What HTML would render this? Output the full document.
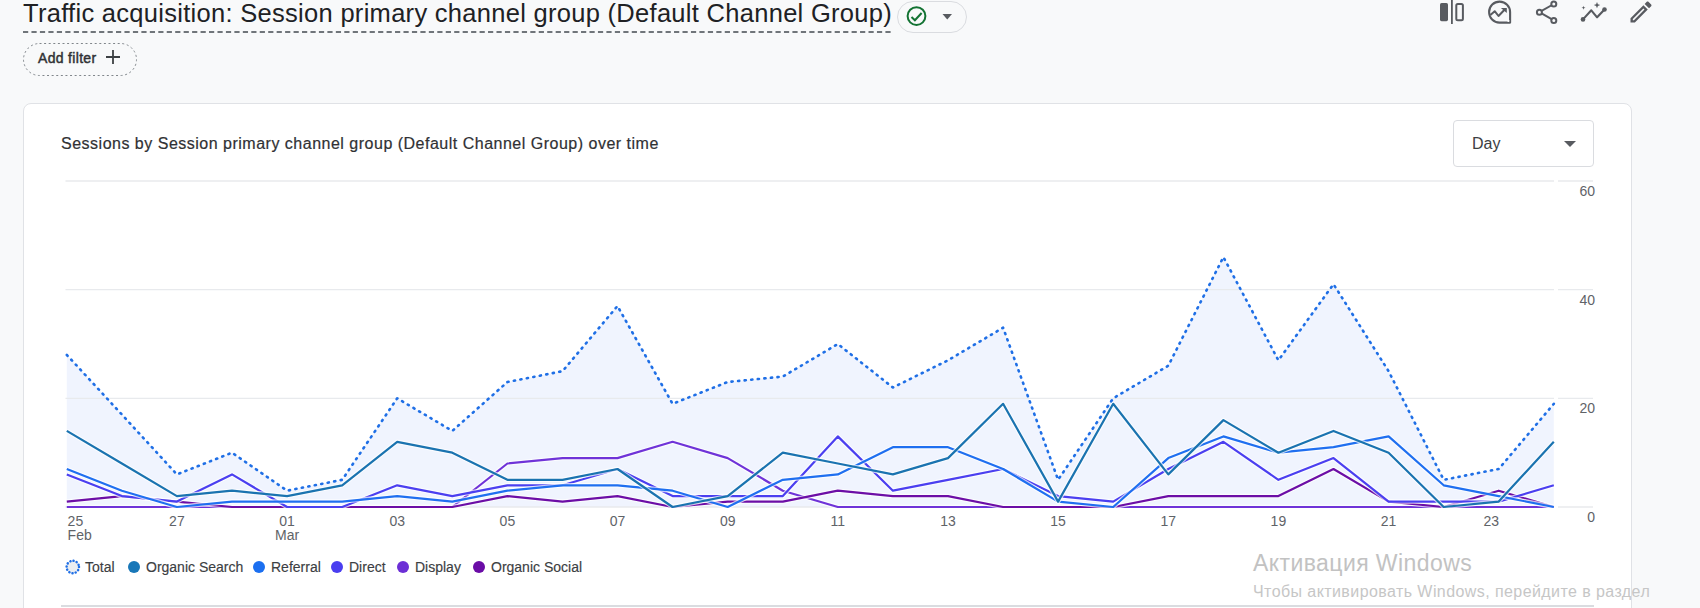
<!DOCTYPE html>
<html><head><meta charset="utf-8">
<style>
html,body{margin:0;padding:0;}
body{width:1700px;height:608px;overflow:hidden;background:#f8f9fa;position:relative;font-family:"Liberation Sans",sans-serif;}
.abs{position:absolute;}
.title{left:23px;top:-4px;font-size:25.5px;letter-spacing:0.29px;color:#202124;white-space:nowrap;line-height:34px;}
.uline{left:23px;top:31px;width:868px;height:2px;background-image:linear-gradient(to right,#80868b 0 5px,transparent 5px 8.5px);background-size:8.5px 2px;}
.pill{left:897px;top:0.5px;width:70px;height:32px;border:1px solid #dadce0;border-radius:16px;box-sizing:border-box;}
.chip{left:23px;top:43px;width:113px;height:32px;border:1px dashed #9aa0a6;border-radius:16px;box-sizing:border-box;}
.chiptext{left:38px;top:49px;font-size:14px;letter-spacing:0.32px;color:#303134;-webkit-text-stroke:0.45px #303134;line-height:18px;}
.card{left:23px;top:103px;width:1609px;height:600px;background:#fff;border:1px solid #e0e2e6;border-radius:8px;box-sizing:border-box;}
.ctitle{left:61px;top:134px;font-size:16px;letter-spacing:0.5px;color:#303134;-webkit-text-stroke:0.2px #303134;line-height:20px;white-space:nowrap;}
.daybox{left:1453px;top:120px;width:141px;height:47px;border:1px solid #dadce0;border-radius:4px;box-sizing:border-box;}
.daytext{left:1472px;top:134px;font-size:16px;color:#3c4043;line-height:20px;}
.chart{position:absolute;left:0;top:0;}
.legend{top:559px;font-size:14px;color:#3c4043;-webkit-text-stroke:0.15px #3c4043;line-height:16px;white-space:nowrap;}
.dot{width:12px;height:12px;border-radius:6px;top:561px;}
.botline{left:61px;top:605px;width:1533px;height:2px;background:#dadce0;}
.wm1{left:1253px;top:549px;font-size:23px;letter-spacing:0.42px;color:#c2c2c2;line-height:28px;white-space:nowrap;}
.wm2{left:1253px;top:581.5px;font-size:16px;letter-spacing:0.42px;color:#c6c6c6;line-height:20px;white-space:nowrap;}
</style></head><body>
<div class="abs title">Traffic acquisition: Session primary channel group (Default Channel Group)</div>
<svg class="abs" style="left:0;top:0" width="900" height="40"><line x1="23" y1="32" x2="891" y2="32" stroke="#70757a" stroke-width="2" stroke-dasharray="5.2 3.255"/></svg>
<div class="abs pill"></div>
<svg class="abs" style="left:905px;top:5px" width="24" height="24" viewBox="0 0 24 24"><circle cx="11.5" cy="11.1" r="8.9" fill="none" stroke="#137333" stroke-width="2"/><path d="M6.5 12.1 L9.9 15.3 L16.6 8" fill="none" stroke="#137333" stroke-width="2"/></svg>
<svg class="abs" style="left:940px;top:12px" width="16" height="10" viewBox="0 0 16 10"><path d="M2.5 2 L12 2 L7.25 7.4 Z" fill="#585b60"/></svg>

<svg class="abs" style="left:1436px;top:0px" width="32" height="28" viewBox="0 0 32 28">
<rect x="4" y="2.9" width="8" height="18.3" rx="1.6" fill="#585b60"/>
<rect x="15" y="0" width="1.8" height="24" fill="#585b60"/>
<rect x="20.3" y="3.9" width="6.6" height="16.3" rx="1.5" fill="none" stroke="#585b60" stroke-width="2"/>
</svg>
<svg class="abs" style="left:1484px;top:0px" width="32" height="28" viewBox="0 0 32 28">
<path d="M15.5 22.6 A10.5 10.5 0 1 1 26.1 12.2 L26.1 22.6 Z" fill="none" stroke="#585b60" stroke-width="2.1" stroke-linejoin="round"/>
<circle cx="24.4" cy="20.9" r="1.1" fill="#fff"/>
<path d="M6.4 14.9 L10.7 11.2 L14.5 16 L20.5 9.8" fill="none" stroke="#585b60" stroke-width="2" stroke-linejoin="round"/>
<path d="M16.9 7.9 L22.8 7.9 L22.8 13 Z" fill="#585b60"/>
</svg>
<svg class="abs" style="left:1530px;top:0px" width="32" height="28" viewBox="0 0 32 28">
<line x1="9.4" y1="12.2" x2="23.8" y2="4" stroke="#585b60" stroke-width="2"/>
<line x1="9.4" y1="12.2" x2="23.8" y2="20.4" stroke="#585b60" stroke-width="2"/>
<circle cx="9.4" cy="12.2" r="2.5" fill="#f8f9fa" stroke="#585b60" stroke-width="2"/>
<circle cx="23.8" cy="4" r="2.5" fill="#f8f9fa" stroke="#585b60" stroke-width="2"/>
<circle cx="23.8" cy="20.4" r="2.5" fill="#f8f9fa" stroke="#585b60" stroke-width="2"/>
</svg>
<svg class="abs" style="left:1576px;top:0px" width="34" height="28" viewBox="0 0 34 28">
<path d="M7 19.4 L15.3 10.3 L21.1 17.3 L28.5 9.5" fill="none" stroke="#585b60" stroke-width="2.1" stroke-linejoin="round"/>
<circle cx="7" cy="19.4" r="2.3" fill="#585b60"/><circle cx="28.5" cy="9.5" r="2.3" fill="#585b60"/>
<path d="M7.5 5.8 L8 7.3 L9.5 7.8 L8 8.3 L7.5 9.8 L7 8.3 L5.5 7.8 L7 7.3 Z" fill="#585b60"/>
<path d="M21 2 L21.9 4.2 L24.2 5.1 L21.9 6 L21 8.2 L20.1 6 L17.8 5.1 L20.1 4.2 Z" fill="#585b60"/>
</svg>
<svg class="abs" style="left:1627px;top:-1.8px" width="28" height="28" viewBox="0 0 24 24"><path fill="#585b60" d="M3 17.25V21h3.75L17.81 9.94l-3.75-3.75L3 17.25zM5.92 19H5v-.92l9.06-9.06.92.92L5.92 19zM20.71 5.63l-2.34-2.34c-.2-.2-.45-.29-.71-.29s-.51.1-.7.29l-1.83 1.83 3.75 3.75 1.83-1.83c.39-.39.39-1.02 0-1.41z"/></svg>

<svg class="abs" style="left:22.5px;top:42.5px" width="115" height="34" viewBox="0 0 115 34"><rect x="0.5" y="0.5" width="113" height="32" rx="16" fill="none" stroke="#80868b" stroke-width="1" stroke-dasharray="2 2.6"/></svg>
<div class="abs chiptext">Add filter</div>
<svg class="abs" style="left:105px;top:49px" width="16" height="16" viewBox="0 0 16 16"><path d="M8 1 L8 15 M1 8 L15 8" stroke="#3c4043" stroke-width="1.8"/></svg>

<div class="abs card"></div>
<div class="abs ctitle">Sessions by Session primary channel group (Default Channel Group) over time</div>
<div class="abs daybox"></div>
<div class="abs daytext">Day</div>
<svg class="abs" style="left:1562px;top:139px" width="16" height="10" viewBox="0 0 16 10"><path d="M2 2 L14 2 L8 8 Z" fill="#585b60"/></svg>

<svg class="chart" width="1700" height="608" viewBox="0 0 1700 608">
<path d="M66.8,507.0 L66.8,354.9 L121.9,414.6 L176.9,474.4 L232.0,452.7 L287.1,490.7 L342.2,479.8 L397.2,398.3 L452.3,430.9 L507.4,382.0 L562.5,371.2 L617.5,306.0 L672.6,403.8 L727.7,382.0 L782.8,376.6 L837.8,344.0 L892.9,387.5 L948.0,360.3 L1003.1,327.7 L1058.1,479.8 L1113.2,398.3 L1168.3,365.7 L1223.4,257.1 L1278.4,360.3 L1333.5,284.2 L1388.6,371.2 L1443.7,479.8 L1498.7,469.0 L1553.8,403.8 L1553.8,507.0 Z" fill="#f0f4fe" />
<line x1="65.5" y1="507.0" x2="1554" y2="507.0" stroke="#e8eaed" stroke-width="1.3"/><line x1="1558" y1="507.0" x2="1593" y2="507.0" stroke="#e8eaed" stroke-width="1.3"/><line x1="65.5" y1="398.3" x2="1554" y2="398.3" stroke="#e8eaed" stroke-width="1.3"/><line x1="1558" y1="398.3" x2="1593" y2="398.3" stroke="#e8eaed" stroke-width="1.3"/><line x1="65.5" y1="289.7" x2="1554" y2="289.7" stroke="#e8eaed" stroke-width="1.3"/><line x1="1558" y1="289.7" x2="1593" y2="289.7" stroke="#e8eaed" stroke-width="1.3"/><line x1="65.5" y1="181.0" x2="1554" y2="181.0" stroke="#e8eaed" stroke-width="1.3"/><line x1="1558" y1="181.0" x2="1593" y2="181.0" stroke="#e8eaed" stroke-width="1.3"/>
<g font-family="Liberation Sans, sans-serif" font-size="14" fill="#5f6368"><text x="1595" y="522.0" text-anchor="end">0</text><text x="1595" y="413.3" text-anchor="end">20</text><text x="1595" y="304.7" text-anchor="end">40</text><text x="1595" y="196.0" text-anchor="end">60</text></g>
<g font-family="Liberation Sans, sans-serif" font-size="14" fill="#5f6368"><text x="67.6" y="525.6">25</text><text x="67.6" y="539.7">Feb</text><text x="176.9" y="525.6" text-anchor="middle">27</text><text x="287.1" y="525.6" text-anchor="middle">01</text><text x="287.1" y="539.7" text-anchor="middle">Mar</text><text x="397.2" y="525.6" text-anchor="middle">03</text><text x="507.4" y="525.6" text-anchor="middle">05</text><text x="617.5" y="525.6" text-anchor="middle">07</text><text x="727.7" y="525.6" text-anchor="middle">09</text><text x="837.8" y="525.6" text-anchor="middle">11</text><text x="948.0" y="525.6" text-anchor="middle">13</text><text x="1058.1" y="525.6" text-anchor="middle">15</text><text x="1168.3" y="525.6" text-anchor="middle">17</text><text x="1278.4" y="525.6" text-anchor="middle">19</text><text x="1388.6" y="525.6" text-anchor="middle">21</text><text x="1491.3" y="525.6" text-anchor="middle">23</text></g>
<polyline points="66.8,507.0 121.9,507.0 176.9,507.0 232.0,507.0 287.1,507.0 342.2,507.0 397.2,507.0 452.3,507.0 507.4,463.5 562.5,458.1 617.5,458.1 672.6,441.8 727.7,458.1 782.8,490.7 837.8,507.0 892.9,507.0 948.0,507.0 1003.1,507.0 1058.1,507.0 1113.2,507.0 1168.3,507.0 1223.4,507.0 1278.4,507.0 1333.5,507.0 1388.6,507.0 1443.7,507.0 1498.7,507.0 1553.8,507.0" fill="none" stroke="#fff" stroke-width="4.5" stroke-linejoin="round" stroke-opacity="0.7"/><polyline points="66.8,507.0 121.9,507.0 176.9,507.0 232.0,507.0 287.1,507.0 342.2,507.0 397.2,507.0 452.3,507.0 507.4,463.5 562.5,458.1 617.5,458.1 672.6,441.8 727.7,458.1 782.8,490.7 837.8,507.0 892.9,507.0 948.0,507.0 1003.1,507.0 1058.1,507.0 1113.2,507.0 1168.3,507.0 1223.4,507.0 1278.4,507.0 1333.5,507.0 1388.6,507.0 1443.7,507.0 1498.7,507.0 1553.8,507.0" fill="none" stroke="#6f33d8" stroke-width="2.2" stroke-linejoin="round" />
<polyline points="66.8,501.6 121.9,496.1 176.9,501.6 232.0,507.0 287.1,507.0 342.2,507.0 397.2,507.0 452.3,507.0 507.4,496.1 562.5,501.6 617.5,496.1 672.6,507.0 727.7,501.6 782.8,501.6 837.8,490.7 892.9,496.1 948.0,496.1 1003.1,507.0 1058.1,507.0 1113.2,507.0 1168.3,496.1 1223.4,496.1 1278.4,496.1 1333.5,469.0 1388.6,501.6 1443.7,507.0 1498.7,490.7 1553.8,507.0" fill="none" stroke="#fff" stroke-width="4.5" stroke-linejoin="round" stroke-opacity="0.7"/><polyline points="66.8,501.6 121.9,496.1 176.9,501.6 232.0,507.0 287.1,507.0 342.2,507.0 397.2,507.0 452.3,507.0 507.4,496.1 562.5,501.6 617.5,496.1 672.6,507.0 727.7,501.6 782.8,501.6 837.8,490.7 892.9,496.1 948.0,496.1 1003.1,507.0 1058.1,507.0 1113.2,507.0 1168.3,496.1 1223.4,496.1 1278.4,496.1 1333.5,469.0 1388.6,501.6 1443.7,507.0 1498.7,490.7 1553.8,507.0" fill="none" stroke="#6c0ea6" stroke-width="2.2" stroke-linejoin="round" />
<polyline points="66.8,474.4 121.9,496.1 176.9,501.6 232.0,474.4 287.1,507.0 342.2,507.0 397.2,485.3 452.3,496.1 507.4,485.3 562.5,485.3 617.5,469.0 672.6,496.1 727.7,496.1 782.8,496.1 837.8,436.4 892.9,490.7 948.0,479.8 1003.1,469.0 1058.1,496.1 1113.2,501.6 1168.3,469.0 1223.4,441.8 1278.4,479.8 1333.5,458.1 1388.6,501.6 1443.7,501.6 1498.7,501.6 1553.8,485.3" fill="none" stroke="#fff" stroke-width="4.5" stroke-linejoin="round" stroke-opacity="0.7"/><polyline points="66.8,474.4 121.9,496.1 176.9,501.6 232.0,474.4 287.1,507.0 342.2,507.0 397.2,485.3 452.3,496.1 507.4,485.3 562.5,485.3 617.5,469.0 672.6,496.1 727.7,496.1 782.8,496.1 837.8,436.4 892.9,490.7 948.0,479.8 1003.1,469.0 1058.1,496.1 1113.2,501.6 1168.3,469.0 1223.4,441.8 1278.4,479.8 1333.5,458.1 1388.6,501.6 1443.7,501.6 1498.7,501.6 1553.8,485.3" fill="none" stroke="#4b3ff0" stroke-width="2.2" stroke-linejoin="round" />
<polyline points="66.8,469.0 121.9,490.7 176.9,507.0 232.0,501.6 287.1,501.6 342.2,501.6 397.2,496.1 452.3,501.6 507.4,490.7 562.5,485.3 617.5,485.3 672.6,490.7 727.7,507.0 782.8,479.8 837.8,474.4 892.9,447.2 948.0,447.2 1003.1,469.0 1058.1,501.6 1113.2,507.0 1168.3,458.1 1223.4,436.4 1278.4,452.7 1333.5,447.2 1388.6,436.4 1443.7,485.3 1498.7,496.1 1553.8,507.0" fill="none" stroke="#fff" stroke-width="4.5" stroke-linejoin="round" stroke-opacity="0.7"/><polyline points="66.8,469.0 121.9,490.7 176.9,507.0 232.0,501.6 287.1,501.6 342.2,501.6 397.2,496.1 452.3,501.6 507.4,490.7 562.5,485.3 617.5,485.3 672.6,490.7 727.7,507.0 782.8,479.8 837.8,474.4 892.9,447.2 948.0,447.2 1003.1,469.0 1058.1,501.6 1113.2,507.0 1168.3,458.1 1223.4,436.4 1278.4,452.7 1333.5,447.2 1388.6,436.4 1443.7,485.3 1498.7,496.1 1553.8,507.0" fill="none" stroke="#1f6ff0" stroke-width="2.2" stroke-linejoin="round" />
<polyline points="66.8,430.9 121.9,463.5 176.9,496.1 232.0,490.7 287.1,496.1 342.2,485.3 397.2,441.8 452.3,452.7 507.4,479.8 562.5,479.8 617.5,469.0 672.6,507.0 727.7,496.1 782.8,452.7 837.8,463.5 892.9,474.4 948.0,458.1 1003.1,403.8 1058.1,501.6 1113.2,403.8 1168.3,474.4 1223.4,420.1 1278.4,452.7 1333.5,430.9 1388.6,452.7 1443.7,507.0 1498.7,501.6 1553.8,441.8" fill="none" stroke="#fff" stroke-width="4.5" stroke-linejoin="round" stroke-opacity="0.7"/><polyline points="66.8,430.9 121.9,463.5 176.9,496.1 232.0,490.7 287.1,496.1 342.2,485.3 397.2,441.8 452.3,452.7 507.4,479.8 562.5,479.8 617.5,469.0 672.6,507.0 727.7,496.1 782.8,452.7 837.8,463.5 892.9,474.4 948.0,458.1 1003.1,403.8 1058.1,501.6 1113.2,403.8 1168.3,474.4 1223.4,420.1 1278.4,452.7 1333.5,430.9 1388.6,452.7 1443.7,507.0 1498.7,501.6 1553.8,441.8" fill="none" stroke="#1a73b0" stroke-width="2.2" stroke-linejoin="round" />
<polyline points="66.8,354.9 121.9,414.6 176.9,474.4 232.0,452.7 287.1,490.7 342.2,479.8 397.2,398.3 452.3,430.9 507.4,382.0 562.5,371.2 617.5,306.0 672.6,403.8 727.7,382.0 782.8,376.6 837.8,344.0 892.9,387.5 948.0,360.3 1003.1,327.7 1058.1,479.8 1113.2,398.3 1168.3,365.7 1223.4,257.1 1278.4,360.3 1333.5,284.2 1388.6,371.2 1443.7,479.8 1498.7,469.0 1553.8,403.8" fill="none" stroke="#1f6fe6" stroke-width="2.6" stroke-dasharray="1.2 5.4" stroke-linecap="round" stroke-linejoin="round"/>
</svg>

<svg class="abs" style="left:64px;top:559px" width="18" height="18" viewBox="0 0 18 18"><circle cx="8.8" cy="8" r="6.2" fill="#eceef1" stroke="#1f6fe6" stroke-width="2.5" stroke-dasharray="0.1 3.146" stroke-linecap="round"/></svg>
<div class="abs legend" style="left:85px">Total</div>
<div class="abs dot" style="left:128px;background:#1877b8"></div>
<div class="abs legend" style="left:146px">Organic Search</div>
<div class="abs dot" style="left:253px;background:#1b6ff0"></div>
<div class="abs legend" style="left:271px">Referral</div>
<div class="abs dot" style="left:331px;background:#4a3ef0"></div>
<div class="abs legend" style="left:349px">Direct</div>
<div class="abs dot" style="left:397px;background:#6c2fd6"></div>
<div class="abs legend" style="left:415px">Display</div>
<div class="abs dot" style="left:473px;background:#6a0ca6"></div>
<div class="abs legend" style="left:491px">Organic Social</div>

<div class="abs botline"></div>
<div class="abs wm1">Активация Windows</div>
<div class="abs wm2">Чтобы активировать Windows, перейдите в раздел</div>
</body></html>
